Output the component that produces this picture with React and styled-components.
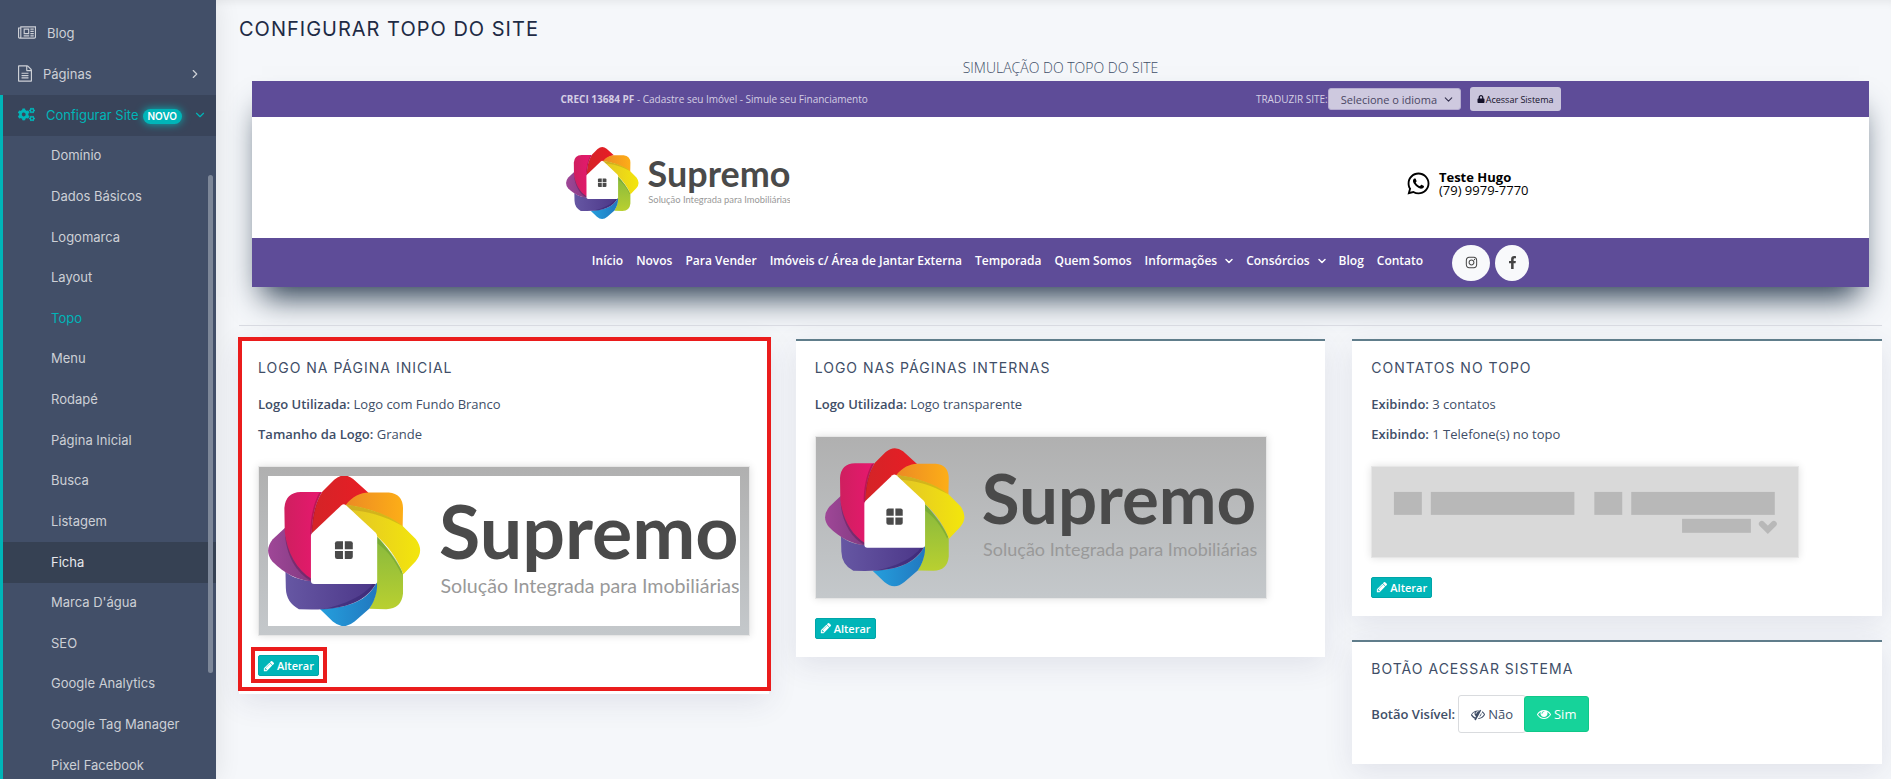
import React from "react";
import styled, { createGlobalStyle } from "styled-components";
import {
  FaCogs,
  FaDesktop,
  FaFacebookF,
  FaInstagram,
  FaLock,
  FaWhatsapp,
} from "react-icons/fa";
import { LuChevronDown, LuChevronRight } from "react-icons/lu";

const siteMenu = [
  "Domínio",
  "Dados Básicos",
  "Logomarca",
  "Layout",
  "Topo",
  "Menu",
  "Rodapé",
  "Página Inicial",
  "Busca",
  "Listagem",
  "Ficha",
  "Marca D'água",
  "SEO",
  "Google Analytics",
  "Google Tag Manager",
  "Pixel Facebook",
];

const navLinks = [
  { label: "Início" },
  { label: "Novos" },
  { label: "Para Vender" },
  { label: "Imóveis c/ Área de Jantar Externa" },
  { label: "Temporada" },
  { label: "Quem Somos" },
  { label: "Informações", more: true },
  { label: "Consórcios", more: true },
  { label: "Blog" },
  { label: "Contato" },
];

function NewspaperIcon() {
  return (
    <svg width="18" height="16" viewBox="0 128 2048 1536" fill="currentColor">
      <path
        transform="translate(0 128)"
        d="M1152 384h-384v384h384v-384zM1280 1024v128h-640v-128h640zM1280 256v640h-640v-640h640zM1792 1024v128h-384v-128h384zM1792 768v128h-384v-128h384zM1792 512v128h-384v-128h384zM1792 256v128h-384v-128h384zM256 1216v-960h-128v960q0 26 19 45t45 19 45-19 19-45zM1920 1216v-1088h-1536v1088q0 33-11 64h1483q26 0 45-19t19-45zM2048 0v1216q0 80-56 136t-136 56h-1664q-80 0-136-56t-56-136v-1088h256v-128h1792z"
      />
    </svg>
  );
}

function FileIcon() {
  return (
    <svg width="14" height="17" viewBox="128 0 1536 1792" fill="currentColor">
      <path d="M1596 380q28 28 48 76t20 88v1152q0 40-28 68t-68 28h-1344q-40 0-68-28t-28-68v-1600q0-40 28-68t68-28h896q40 0 88 20t76 48zM1152 136v376h376q-10-29-22-41l-313-313q-12-12-41-22zM1536 1664v-1024h-416q-40 0-68-28t-28-68v-416h-768v1536h1280zM512 832q0-14 9-23t23-9h704q14 0 23 9t9 23v64q0 14-9 23t-23 9h-704q-14 0-23-9t-9-23v-64zM1248 1056q14 0 23 9t9 23v64q0 14-9 23t-23 9h-704q-14 0-23-9t-9-23v-64q0-14 9-23t23-9h704zM1248 1312q14 0 23 9t9 23v64q0 14-9 23t-23 9h-704q-14 0-23-9t-9-23v-64q0-14 9-23t23-9h704z" />
    </svg>
  );
}

function PencilIcon() {
  return (
    <svg width="12" height="12" viewBox="0 0 1792 1792" fill="currentColor">
      <path d="M491 1536l91-91-235-235-91 91v107h128v128h107zM1014 608q0-22-22-22-10 0-17 7l-542 542q-7 7-7 17 0 22 22 22 10 0 17-7l542-542q7-7 7-17zM960 416l416 416-832 832h-416v-416zM1643 512q0 53-37 90l-166 166-416-416 166-165q36-38 90-38 53 0 91 38l235 234q37 39 37 91z" />
    </svg>
  );
}

function EyeIcon() {
  return (
    <svg width="14" height="14" viewBox="0 0 1792 1792" fill="currentColor">
      <path d="M1664 960q-152-236-381-353 61 104 61 225 0 185-131.5 316.5t-316.5 131.5-316.5-131.5-131.5-316.5q0-121 61-225-229 117-381 353 133 205 333.5 326.5t434.5 121.5 434.5-121.5 333.5-326.5zM944 576q0-20-14-34t-34-14q-125 0-214.5 89.5t-89.5 214.5q0 20 14 34t34 14 34-14 14-34q0-86 61-147t147-61q20 0 34-14t14-34zM1792 960q0 34-20 69-140 230-376.5 368.5t-499.5 138.5-499.5-139-376.5-368q-20-35-20-69t20-69q140-229 376.5-368t499.5-139 499.5 139 376.5 368q20 35 20 69z" />
    </svg>
  );
}

function EyeSlashIcon() {
  return (
    <svg width="14" height="14" viewBox="0 0 1792 1792" fill="currentColor">
      <path d="M555 1335l78-141q-87-63-136-159t-49-203q0-121 61-225-229 117-381 353 167 258 427 375zM944 576q0-20-14-34t-34-14q-125 0-214.5 89.5t-89.5 214.5q0 20 14 34t34 14 34-14 14-34q0-86 61-147t147-61q20 0 34-14t14-34zM1307 449q0 7-1 9-105 188-315 566t-316 567l-49 89q-10 16-28 16-12 0-134-70-16-10-16-28 0-12 44-87-143-65-263.5-173t-208.5-245q-20-31-20-69t20-69q153-235 380-371t496-136q89 0 180 17l54-97q10-16 28-16 5 0 18 6t31 15.5 33 18.5 31.5 18.5 19.5 11.5q16 10 16 27zM1344 832q0 139-79 253.5t-209 164.5l280-502q8 45 8 84zM1792 960q0 35-20 69-39 64-109 145-150 172-347.5 267t-419.5 95l74-132q212-18 392.5-137t301.5-307q-115-179-282-294l63-112q95 64 182.5 153t144.5 184q20 34 20 69z" />
    </svg>
  );
}

function SupremoLogo() {
  return (
    <svg viewBox="30 35 1296 416" preserveAspectRatio="xMidYMid slice" role="img">
      <defs>
        <linearGradient id="red">
          <stop offset="0" stopColor="#d42427" />
          <stop offset="1" stopColor="#e81d25" />
        </linearGradient>
        <linearGradient id="orange">
          <stop offset="0" stopColor="#ec8a24" />
          <stop offset="1" stopColor="#fdae17" />
        </linearGradient>
        <linearGradient id="yellow">
          <stop offset="0" stopColor="#e3c427" />
          <stop offset="1" stopColor="#f3e60c" />
        </linearGradient>
        <linearGradient id="green" x2="0" y2="1">
          <stop offset="0" stopColor="#86b83e" />
          <stop offset="1" stopColor="#b9d030" />
        </linearGradient>
        <linearGradient id="blue">
          <stop offset="0" stopColor="#259fdd" />
          <stop offset="1" stopColor="#2178bf" />
        </linearGradient>
        <linearGradient id="indigo">
          <stop offset="0" stopColor="#6657a3" />
          <stop offset="1" stopColor="#4b3688" />
        </linearGradient>
        <linearGradient id="purple">
          <stop offset="0" stopColor="#9f4797" />
          <stop offset="1" stopColor="#823a82" />
        </linearGradient>
        <linearGradient id="pink">
          <stop offset="0" stopColor="#cf1f5f" />
          <stop offset="1" stopColor="#e8186f" />
        </linearGradient>
      </defs>
      <path
        fill="url(#red)"
        d="M150 198C150 150 160 110 179 80L212 47Q238 25 264 45L306 83Q270 90 245 118L238 130Z"
      />
      <path
        fill="url(#orange)"
        d="M243 117C262 92 285 83 306 82L362 82Q400 85 401 125L400 178C360 145 300 122 243 117Z"
      />
      <path
        fill="url(#green)"
        d="M326 200C355 230 385 270 401 305L401 360Q397 402 355 403L308 402C322 380 332 355 326 325Z"
      />
      <path
        fill="#5f9a2e"
        opacity="0.45"
        d="M330 203C358 232 388 270 400 300L396 306C380 270 356 240 330 222Z"
      />
      <path
        fill="url(#yellow)"
        d="M243 116C300 122 360 142 400 174L436 210Q460 242 436 271L402 307C385 265 360 228 326 200Z"
      />
      <path
        fill="#b08a1c"
        opacity="0.4"
        d="M243 116C300 122 360 142 400 174C350 146 300 132 256 130Z"
      />
      <path
        fill="url(#blue)"
        d="M172 402C250 400 305 380 329 328C333 350 322 385 308 402L268 437Q238 462 208 437Z"
      />
      <path
        fill="url(#indigo)"
        d="M78 300C100 318 125 324 150 325L160 330L329 329C300 380 250 403 150 404L115 403Q80 385 79 345Z"
      />
      <path
        fill="#2c1c66"
        opacity="0.4"
        d="M329 329C306 378 250 400 175 404C245 390 295 365 318 333Z"
      />
      <path
        fill="url(#purple)"
        d="M77 179L43 211Q18 242 42 272C75 305 110 323 152 327L152 318Z"
      />
      <path
        fill="#641a55"
        opacity="0.5"
        d="M77 200C80 250 105 305 152 327L152 312C115 290 92 240 77 200Z"
      />
      <path
        fill="url(#pink)"
        d="M76 190L75 125Q78 82 120 81L178 81C158 115 152 150 150 195L152 321C108 295 82 245 76 190Z"
      />
      <path
        fill="#8b1238"
        opacity="0.45"
        d="M178 81C160 115 154 150 151 196L146 198C146 155 154 115 170 84Z"
      />
      <path
        fill="#fff"
        d="M232 117Q238 112 244 117L326 193Q330 197 330 203V326Q330 334 322 334H157Q148 334 148 325V202Q148 197 152 193Z"
      />
      <g fill="#4a4a4a">
        <path d="M220 216h16v22h-22v-16q0-6 6-6z" />
        <path d="M241 216h16q6 0 6 6v16h-22z" />
        <path d="M214 243h22v22h-16q-6 0-6-6z" />
        <path d="M241 243h22v16q0 6-6 6h-16z" />
      </g>
      <LogoName x="500" y="264">
        Supremo
      </LogoName>
      <LogoTagline x="504" y="359">
        Solução Integrada para Imobiliárias
      </LogoTagline>
    </svg>
  );
}

function ContactsDrawing() {
  return (
    <svg viewBox="0 0 427 90" fill="#b8b8b8">
      <rect x="22" y="25" width="28" height="23" />
      <rect x="59" y="25" width="144" height="23" />
      <rect x="223" y="25" width="28" height="23" />
      <rect x="260" y="25" width="144" height="23" />
      <rect x="311" y="52" width="69" height="14" />
      <path
        d="M391 57L397 63L403 57"
        fill="none"
        stroke="#b8b8b8"
        strokeWidth="6"
        strokeLinecap="round"
      />
    </svg>
  );
}

function EditButton() {
  return (
    <Edit type="button">
      <PencilIcon />
      Alterar
    </Edit>
  );
}

function App() {
  return (
    <Page>
      <GlobalStyle />
      <Sidebar>
        <MenuLink href="#" aria-label="Site">
          <FaDesktop />
        </MenuLink>
        <MenuLink href="#">
          <NewspaperIcon />
          Blog
        </MenuLink>
        <MenuLink href="#">
          <FileIcon />
          Páginas
          <Arrow>
            <LuChevronRight />
          </Arrow>
        </MenuLink>
        <OpenGroup>
          <MenuLink href="#" $active>
            <FaCogs />
            <MenuLabel>
              Configurar Site <Badge>NOVO</Badge>
            </MenuLabel>
            <Arrow>
              <LuChevronDown />
            </Arrow>
          </MenuLink>
          <SubMenu>
            {siteMenu.map((item) => (
              <li key={item}>
                <SubLink
                  href="#"
                  $current={item === "Topo"}
                  $hovered={item === "Ficha"}
                >
                  {item}
                </SubLink>
              </li>
            ))}
          </SubMenu>
        </OpenGroup>
        <ScrollThumb />
      </Sidebar>

      <Main>
        <Title>CONFIGURAR TOPO DO SITE</Title>
        <Simulation>
          <Caption>SIMULAÇÃO DO TOPO DO SITE</Caption>
          <SiteTop>
            <InfoBar>
              <Inner>
                <span>
                  <b>CRECI 13684 PF</b> - Cadastre seu Imóvel - Simule seu
                  Financiamento
                </span>
                <InfoActions>
                  <label htmlFor="idioma">TRADUZIR SITE:</label>
                  <SelectWrap>
                    <select id="idioma">
                      <option>Selecione o idioma</option>
                    </select>
                    <LuChevronDown />
                  </SelectWrap>
                  <AccessButton type="button">
                    <FaLock />
                    Acessar Sistema
                  </AccessButton>
                </InfoActions>
              </Inner>
            </InfoBar>
            <BrandBar>
              <BrandInner>
                <BrandLogo>
                  <SupremoLogo />
                </BrandLogo>
                <Contact>
                  <FaWhatsapp />
                  <div>
                    <b>Teste Hugo</b>
                    <span>(79) 9979-7770</span>
                  </div>
                </Contact>
              </BrandInner>
            </BrandBar>
            <NavBar>
              <NavLinks>
                {navLinks.map((link) => (
                  <a href="#" key={link.label}>
                    {link.label}
                    {link.more && <LuChevronDown />}
                  </a>
                ))}
              </NavLinks>
              <Socials>
                <Social href="#" $width="38px" aria-label="Instagram">
                  <FaInstagram />
                </Social>
                <Social href="#" $width="34px" aria-label="Facebook">
                  <FaFacebookF />
                </Social>
              </Socials>
            </NavBar>
          </SiteTop>
        </Simulation>
        <Divider />

        <Cards>
          <Card>
            <Highlight $inset="-4px -2px 3px -1px" />
            <CardTitle>LOGO NA PÁGINA INICIAL</CardTitle>
            <Info>
              <b>Logo Utilizada:</b> Logo com Fundo Branco
            </Info>
            <Info>
              <b>Tamanho da Logo:</b> Grande
            </Info>
            <Preview>
              <WhiteLogo>
                <SupremoLogo />
              </WhiteLogo>
            </Preview>
            <EditWrap>
              <Highlight $inset="-8px -8px -7px -7px" />
              <EditButton />
            </EditWrap>
          </Card>

          <Card>
            <CardTitle>LOGO NAS PÁGINAS INTERNAS</CardTitle>
            <Info>
              <b>Logo Utilizada:</b> Logo transparente
            </Info>
            <Preview $width="92%">
              <ClearLogo>
                <SupremoLogo />
              </ClearLogo>
            </Preview>
            <EditWrap>
              <EditButton />
            </EditWrap>
          </Card>

          <Column>
            <Card>
              <CardTitle>CONTATOS NO TOPO</CardTitle>
              <Info>
                <b>Exibindo:</b> 3 contatos
              </Info>
              <Info>
                <b>Exibindo:</b> 1 Telefone(s) no topo
              </Info>
              <Preview $width="87%" $flat>
                <ContactsDrawing />
              </Preview>
              <EditWrap>
                <EditButton />
              </EditWrap>
            </Card>
            <Card>
              <CardTitle>BOTÃO ACESSAR SISTEMA</CardTitle>
              <Visibility>
                <b>Botão Visível:</b>
                <Toggle type="button">
                  <EyeSlashIcon />
                  Não
                </Toggle>
                <Toggle type="button" $on>
                  <EyeIcon />
                  Sim
                </Toggle>
              </Visibility>
            </Card>
          </Column>
        </Cards>
      </Main>
    </Page>
  );
}

const GlobalStyle = createGlobalStyle`
  * {
    box-sizing: border-box;
  }

  body {
    margin: 0;
    background: #f5f7fa;
    color: #404e67;
    font-family: "Open Sans", sans-serif;
    font-size: 13px;
    line-height: 20px;
  }

  a {
    color: inherit;
    text-decoration: none;
  }

  svg {
    display: block;
    flex-shrink: 0;
  }

  button, select {
    font-family: inherit;
    cursor: pointer;
  }
`;

const Page = styled.div`
  display: flex;
  height: 100vh;
  overflow: hidden;
`;

const Sidebar = styled.nav`
  width: 216px;
  flex-shrink: 0;
  position: relative;
  z-index: 1;
  background: #424f68;
  color: #cdd0d6;
  font-family: Inter, sans-serif;
  font-size: 13px;
  box-shadow: 1px 0 24px rgba(0, 0, 0, 0.09);

  > a:first-child {
    margin-top: -28px;
  }
`;

const MenuLink = styled.a`
  display: flex;
  align-items: center;
  height: 41px;
  padding: 0 14px 2px ${(props) => (props.$active ? "15px" : "18px")};
  gap: 11px;
  color: ${(props) => (props.$active ? "#00b5b8" : "inherit")};
  background: ${(props) => (props.$active ? "#39445a" : "none")};

  > svg {
    font-size: 17px;
  }
`;

const MenuLabel = styled.span`
  display: flex;
  align-items: center;
  gap: 4px;
  white-space: nowrap;
`;

const Arrow = styled.i`
  margin-left: auto;
  font-size: 14px;
`;

const Badge = styled.span`
  background: #00b5b8;
  color: #fff;
  border-radius: 8px;
  margin-top: 3px;
  padding: 0 5px;
  font-size: 10px;
  font-weight: 600;
  line-height: 15px;
  box-shadow: 0 0 8px #00b5b8;
`;

const OpenGroup = styled.div`
  border-left: 3px solid #00b5b8;
`;

const SubMenu = styled.ul`
  list-style: none;
  margin: 0;
  padding: 0;
  height: 650px;
  display: grid;
  grid-auto-rows: 1fr;
`;

const SubLink = styled.a`
  display: flex;
  align-items: center;
  height: 100%;
  padding: 0 0 2px 48px;
  color: ${(props) =>
    props.$current ? "#00b5b8" : props.$hovered ? "#e6e8ec" : "inherit"};
  background: ${(props) => (props.$hovered ? "#364153" : "none")};
`;

const ScrollThumb = styled.div`
  position: absolute;
  top: 175px;
  right: 3px;
  width: 5px;
  height: 498px;
  border-radius: 3px;
  background: #7d8798;
`;

const Main = styled.main`
  flex: 1;
  min-width: 0;
  padding: 17px 9px 0 23px;
  box-shadow: inset 0 8px 8px -6px rgba(0, 0, 0, 0.07);
`;

const Title = styled.h1`
  margin: 0 0 17px;
  font-family: Inter, sans-serif;
  font-size: 20px;
  font-weight: 400;
  line-height: 24px;
  letter-spacing: 1px;
  color: #1e2b45;
`;

const Simulation = styled.section`
  padding: 0 13px;
`;

const Caption = styled.div`
  margin-bottom: 3px;
  text-align: center;
  font-size: 14px;
  font-weight: 300;
`;

const SiteTop = styled.div`
  box-shadow: rgb(38, 57, 77) 0 20px 30px -10px;
`;

const InfoBar = styled.div`
  background: #5e4c98;
  color: #d5cfe4;
  font-size: 10px;
`;

const Inner = styled.div`
  max-width: 1000px;
  height: 36px;
  margin: 0 auto;
  display: flex;
  align-items: center;
  justify-content: space-between;
`;

const InfoActions = styled.div`
  display: flex;
  align-items: center;
`;

const SelectWrap = styled.div`
  position: relative;
  margin-right: 9px;

  select {
    appearance: none;
    width: 133px;
    height: 22px;
    padding: 0 12px;
    border: 1px solid #b5acd0;
    border-radius: 3px;
    background: #cec9df;
    color: #4a4763;
    font-size: 11px;
  }

  svg {
    position: absolute;
    top: 5px;
    right: 6px;
    font-size: 13px;
    color: #33304d;
    pointer-events: none;
  }
`;

const AccessButton = styled.button`
  display: flex;
  align-items: center;
  gap: 1px;
  height: 24px;
  padding: 0 7px;
  border: none;
  border-radius: 3px;
  background: #cac5dc;
  color: #15122b;
  font-size: 9px;

  svg {
    font-size: 8px;
  }
`;

const BrandBar = styled.div`
  background: #fff;
  color: #000;
`;

const BrandInner = styled(Inner)`
  height: 121px;
  padding: 0 32px 0 5px;
`;

const BrandLogo = styled.div`
  width: 225px;
  padding-top: 12px;
`;

const LogoName = styled.text`
  font-family: Lato, sans-serif;
  font-size: 207px;
  font-weight: 700;
  fill: #4a4a4a;
`;

const LogoTagline = styled.text`
  font-family: Lato, sans-serif;
  font-size: 54px;
  fill: #999;
`;

const Contact = styled.div`
  display: flex;
  align-items: center;
  gap: 8px;
  padding-top: 12px;
  line-height: 13px;

  svg {
    font-size: 25px;
  }

  b,
  span {
    display: block;
  }
`;

const NavBar = styled.div`
  display: flex;
  align-items: center;
  justify-content: center;
  gap: 29px;
  height: 49px;
  background: #5e4c98;
`;

const NavLinks = styled.nav`
  display: flex;
  gap: 13px;
  padding-bottom: 3px;
  color: #fff;
  font-size: 12px;
  font-weight: 600;

  a {
    display: flex;
    align-items: center;
  }

  svg {
    margin: 0 -2px 0 6px;
    font-size: 12px;
    stroke-width: 3px;
  }
`;

const Socials = styled.div`
  display: flex;
  gap: 5px;
`;

const Social = styled.a`
  display: flex;
  align-items: center;
  justify-content: center;
  width: ${(props) => props.$width};
  height: 36px;
  border-radius: 50%;
  background: #f8f9fb;
  color: #444;
`;

const Divider = styled.hr`
  margin: 38px 0 13px;
  border: 0;
  border-top: 1px solid #d9dbe2;
  position: relative;
`;

const Cards = styled.div`
  display: grid;
  grid-template-columns: repeat(3, 1fr);
  align-items: start;
  gap: 27px;
`;

const Column = styled.div`
  display: grid;
  gap: 24px;
`;

const Card = styled.section`
  position: relative;
  padding: 17px 19px 18px;
  background: #fff;
  border-top: 2px solid #607d8b;
  box-shadow: 0 8px 28px rgba(50, 50, 100, 0.1);
`;

const Highlight = styled.div`
  position: absolute;
  inset: ${(props) => props.$inset};
  border: 4px solid #ea1c1c;
  pointer-events: none;
`;

const CardTitle = styled.h2`
  margin: 0 0 16px;
  font-family: Inter, sans-serif;
  font-size: 14px;
  font-weight: 400;
  line-height: 20px;
  letter-spacing: 1px;
`;

const Info = styled.p`
  margin: 0 0 10px;

  b {
    font-weight: 600;
  }
`;

const Preview = styled.div`
  width: ${(props) => props.$width || "100%"};
  margin: 22px 0 19px;
  border: 1px solid #e6e6e6;
  background: ${(props) =>
    props.$flat ? "#d9d9d9" : "linear-gradient(#b0b0b0, #c4c8cb)"};
  box-shadow: 0 0 8px rgba(0, 0, 0, 0.12);
`;

const WhiteLogo = styled.div`
  margin: 9px;
  background: #fff;

  svg {
    width: 100%;
    height: 150px;
  }
`;

const ClearLogo = styled.div`
  padding: 11px 9px;
`;

const EditWrap = styled.div`
  position: relative;
  width: fit-content;
`;

const Edit = styled.button`
  display: flex;
  align-items: center;
  gap: 2px;
  height: 21px;
  padding: 0 4px;
  border: 1px solid #00a5a8;
  border-radius: 2px;
  background: #00b5b8;
  color: #fff;
  font-size: 11px;
  font-weight: 600;
`;

const Visibility = styled.div`
  display: flex;
  align-items: center;
  margin-bottom: 13px;

  b {
    margin-right: 3px;
    font-weight: 600;
  }
`;

const Toggle = styled.button`
  display: flex;
  align-items: center;
  gap: 3px;
  height: ${(props) => (props.$on ? "36px" : "38px")};
  padding: 0 12px;
  margin-left: ${(props) => (props.$on ? "-2px" : "0")};
  border: 1px solid ${(props) => (props.$on ? "#10c888" : "#d9dbde")};
  border-radius: 3px;
  background: ${(props) => (props.$on ? "#16d39a" : "#fff")};
  color: ${(props) => (props.$on ? "#fff" : "#404e67")};
  font-size: 13px;
`;

export default App;
